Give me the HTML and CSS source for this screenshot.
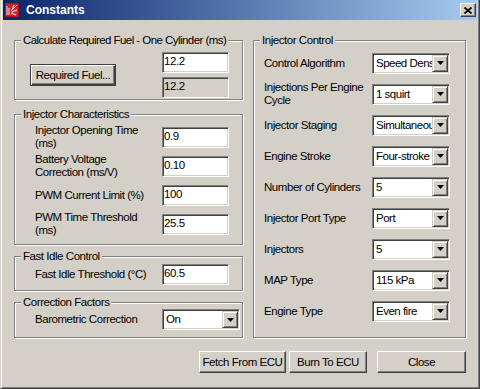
FILE: index.html
```html
<!DOCTYPE html>
<html>
<head>
<meta charset="utf-8">
<link rel="stylesheet" href="styles.css">
</head>
<body>
<div class="window">
  <div class="titlebar">
    <svg class="app-icon" viewBox="0 0 16 16" width="16" height="16">
      <rect x="1" y="1" width="14" height="14" fill="#a8141c"/>
      <rect x="2" y="2" width="12" height="12" fill="#c8262a"/>
      <path d="M3 4v9M5 6v7" stroke="#f4e0e0" stroke-width="1"/>
      <path d="M7 9L13 3M8 10L13 8M8 8L10 3M7 11L12 13" stroke="#fff" stroke-width="1"/>
    </svg>
    <span class="title">Constants</span>
    <div class="close">
      <svg viewBox="0 0 8 7" width="8" height="7"><path d="M0.5 0.5L7.5 6.5M7.5 0.5L0.5 6.5" stroke="#000" stroke-width="1.7"/></svg>
    </div>
  </div>

  <div class="content">
    <div class="columns">
      <div class="left">
        <div class="group g-fuel">
          <span class="group-title title-long">Calculate Required Fuel - One Cylinder (ms)</span>
          <div class="fuel-row">
            <button class="btn btn-default">Required Fuel...</button>
            <div class="fuel-fields">
              <div class="field">12.2</div>
              <div class="field field-disabled">12.2</div>
            </div>
          </div>
        </div>

        <div class="group g-inj">
          <span class="group-title">Injector Characteristics</span>
          <div class="rows rows-left">
            <div class="row"><span class="label">Injector Opening Time<br>(ms)</span><div class="field">0.9</div></div>
            <div class="row"><span class="label">Battery Voltage<br>Correction (ms/V)</span><div class="field">0.10</div></div>
            <div class="row"><span class="label">PWM Current Limit (%)</span><div class="field">100</div></div>
            <div class="row"><span class="label">PWM Time Threshold<br>(ms)</span><div class="field">25.5</div></div>
          </div>
        </div>

        <div class="group g-idle">
          <span class="group-title">Fast Idle Control</span>
          <div class="row single"><span class="label">Fast Idle Threshold (°C)</span><div class="field">60.5</div></div>
        </div>

        <div class="group g-corr">
          <span class="group-title">Correction Factors</span>
          <div class="row single"><span class="label">Barometric Correction</span>
            <div class="combo"><span class="combo-text">On</span><span class="drop"><svg viewBox="0 0 7 4" width="7" height="4"><path d="M0 0H7L3.5 4Z" fill="#000"/></svg></span></div>
          </div>
        </div>
      </div>

      <div class="group g-right">
        <span class="group-title">Injector Control</span>
        <div class="rows rows-right">
          <div class="row"><span class="label">Control Algorithm</span>
            <div class="combo"><span class="combo-text">Speed Density</span><span class="drop"><svg viewBox="0 0 7 4" width="7" height="4"><path d="M0 0H7L3.5 4Z" fill="#000"/></svg></span></div></div>
          <div class="row"><span class="label">Injections Per Engine<br>Cycle</span>
            <div class="combo"><span class="combo-text">1 squirt</span><span class="drop"><svg viewBox="0 0 7 4" width="7" height="4"><path d="M0 0H7L3.5 4Z" fill="#000"/></svg></span></div></div>
          <div class="row"><span class="label">Injector Staging</span>
            <div class="combo"><span class="combo-text">Simultaneous</span><span class="drop"><svg viewBox="0 0 7 4" width="7" height="4"><path d="M0 0H7L3.5 4Z" fill="#000"/></svg></span></div></div>
          <div class="row"><span class="label">Engine Stroke</span>
            <div class="combo"><span class="combo-text">Four-stroke</span><span class="drop"><svg viewBox="0 0 7 4" width="7" height="4"><path d="M0 0H7L3.5 4Z" fill="#000"/></svg></span></div></div>
          <div class="row"><span class="label">Number of Cylinders</span>
            <div class="combo"><span class="combo-text">5</span><span class="drop"><svg viewBox="0 0 7 4" width="7" height="4"><path d="M0 0H7L3.5 4Z" fill="#000"/></svg></span></div></div>
          <div class="row"><span class="label">Injector Port Type</span>
            <div class="combo"><span class="combo-text">Port</span><span class="drop"><svg viewBox="0 0 7 4" width="7" height="4"><path d="M0 0H7L3.5 4Z" fill="#000"/></svg></span></div></div>
          <div class="row"><span class="label">Injectors</span>
            <div class="combo"><span class="combo-text">5</span><span class="drop"><svg viewBox="0 0 7 4" width="7" height="4"><path d="M0 0H7L3.5 4Z" fill="#000"/></svg></span></div></div>
          <div class="row"><span class="label">MAP Type</span>
            <div class="combo"><span class="combo-text">115 kPa</span><span class="drop"><svg viewBox="0 0 7 4" width="7" height="4"><path d="M0 0H7L3.5 4Z" fill="#000"/></svg></span></div></div>
          <div class="row"><span class="label">Engine Type</span>
            <div class="combo"><span class="combo-text">Even fire</span><span class="drop"><svg viewBox="0 0 7 4" width="7" height="4"><path d="M0 0H7L3.5 4Z" fill="#000"/></svg></span></div></div>
        </div>
      </div>
    </div>

    <div class="actions">
      <button class="btn btn-fetch">Fetch From ECU</button>
      <button class="btn btn-burn">Burn To ECU</button>
      <button class="btn btn-close">Close</button>
    </div>
  </div>
</div>
</body>
</html>
```

FILE: styles.css
```css
* { box-sizing: border-box; }
html, body { margin: 0; padding: 0; }
body {
  width: 480px;
  height: 389px;
  overflow: hidden;
  background: #d4d0c8;
  font-family: "Liberation Sans", Arial, sans-serif;
  font-size: 11.5px;
  letter-spacing: -0.45px;
  color: #000;
}

.window {
  width: 480px;
  height: 389px;
  background: #d4d0c8;
  border: 1px solid;
  border-top: none;
  border-color: #d4d0c8 #404040 #404040 #d4d0c8;
  box-shadow: inset 1px 0 #fff, inset -1px -1px #808080;
  padding: 0 2px 2px 2px;
}

.titlebar {
  height: 20px;
  display: flex;
  align-items: center;
  background: linear-gradient(to right, #0a246a, #a6caf0);
  padding: 0 1px;
}
.app-icon { display: block; flex: none; }
.title {
  margin-left: 6px;
  color: #fff;
  font-weight: bold;
  font-size: 12px;
  letter-spacing: 0;
  line-height: 14px;
}
.close {
  margin-left: auto;
  width: 16px;
  height: 14px;
  background: #d4d0c8;
  border: 1px solid;
  border-color: #fff #404040 #404040 #fff;
  box-shadow: inset -1px -1px #808080;
  display: flex;
  align-items: center;
  justify-content: center;
  padding-right: 1px;
}
.close svg { display: block; }

.content { padding: 20px 11px 0 11px; }
.columns { display: flex; gap: 10px; align-items: flex-start; }
.left { width: 229px; display: flex; flex-direction: column; }

.group {
  position: relative;
  border: 1px solid #808080;
  box-shadow: inset 1px 1px #fff, 1px 1px #fff;
}
.group-title {
  position: absolute;
  top: -8px;
  left: 6px;
  padding: 0 2px;
  line-height: 14px;
  background: #d4d0c8;
  white-space: nowrap;
}
.title-long { letter-spacing: -0.55px; }

.g-fuel { padding: 11px 13px 1px 15px; }
.fuel-row { display: flex; align-items: center; justify-content: space-between; }
.fuel-fields { display: flex; flex-direction: column; gap: 4px; }

.g-inj { margin-top: 14px; padding: 9px 0 7px 20px; }
.g-idle { margin-top: 11px; padding: 7px 0 5px 20px; }
.g-corr { margin-top: 11px; padding: 6px 0 7px 20px; }
.g-right { width: 213px; padding: 9px 0 13px 10px; }

.rows { display: flex; flex-direction: column; }
.rows-left { gap: 3px; }
.rows-right { gap: 5px; }

.row { display: flex; align-items: center; height: 26px; }
.row.single { height: 21px; }
.label { line-height: 13px; white-space: nowrap; flex: none; }
.rows-left .label, .g-idle .label, .g-corr .label { width: 127px; }
.rows-right .label { width: 108px; }

.field {
  width: 67px;
  height: 21px;
  background: #fff;
  border: 1px solid;
  border-color: #808080 #fff #fff #808080;
  box-shadow: inset 1px 1px #404040, inset -1px -1px #d4d0c8;
  padding: 0 1px;
  line-height: 17px;
  white-space: nowrap;
}
.field-disabled { background: #d4d0c8; }

.combo {
  display: flex;
  width: 78px;
  height: 21px;
  background: #fff;
  border: 1px solid;
  border-color: #808080 #fff #fff #808080;
  box-shadow: inset 1px 1px #404040, inset -1px -1px #d4d0c8;
  padding: 1px;
}
.combo-text {
  flex: 1;
  min-width: 0;
  overflow: hidden;
  white-space: nowrap;
  padding-left: 2px;
  line-height: 17px;
  letter-spacing: -0.5px;
}
.drop {
  flex: none;
  width: 16px;
  height: 17px;
  background: #d4d0c8;
  border: 1px solid;
  border-color: #d4d0c8 #404040 #404040 #d4d0c8;
  box-shadow: inset 1px 1px #fff, inset -1px -1px #808080;
  display: flex;
  align-items: center;
  justify-content: center;
}
.drop svg { display: block; }

.btn {
  height: 22px;
  background: #d4d0c8;
  border: 1px solid;
  border-color: #fff #404040 #404040 #fff;
  box-shadow: inset -1px -1px #808080;
  font: inherit;
  letter-spacing: inherit;
  color: #000;
  padding: 0;
  margin: 0;
}
.btn-default {
  width: 86px;
  border-color: #404040;
  box-shadow: inset 1px 1px #fff, inset -1px -1px #404040, inset -2px -2px #808080;
}

.actions { display: flex; justify-content: flex-end; margin-top: 13px; }
.btn-fetch { width: 87px; }
.btn-burn { width: 78px; margin-left: 3px; }
.btn-close { width: 89px; margin-left: 10px; }
```
